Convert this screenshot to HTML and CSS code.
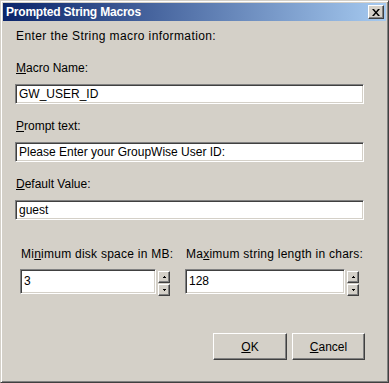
FILE: index.html
```html
<!DOCTYPE html>
<html>
<head>
<meta charset="utf-8">
<link rel="stylesheet" href="styles.css">
</head>
<body>
<div class="window">
  <div class="titlebar">
    <span class="title">Prompted String Macros</span>
    <span class="close"><svg width="8" height="7" viewBox="0 0 8 7"><path d="M0 0h2l2 2.5 2-2.5h2l-3 3.5 3 3.5h-2l-2-2.5-2 2.5h-2l3-3.5z" fill="#000"/></svg></span>
  </div>
  <div class="content">
    <div class="intro">Enter the String macro information:</div>
    <div class="field">
      <div class="label"><u>M</u>acro Name:</div>
      <div class="input">GW_USER_ID</div>
    </div>
    <div class="field">
      <div class="label"><u>P</u>rompt text:</div>
      <div class="input">Please Enter your GroupWise User ID:</div>
    </div>
    <div class="field">
      <div class="label"><u>D</u>efault Value:</div>
      <div class="input">guest</div>
    </div>
    <div class="numrow">
      <div class="numcol first">
        <div class="label wide">Mi<u>n</u>imum disk space in MB:</div>
        <div class="spin">
          <div class="input num">3</div>
          <div class="spinbtns">
            <span class="sbtn"><svg width="3" height="2" viewBox="0 0 3 2"><path d="M1 0h1v1h1v1h-3v-1h1z" fill="#000"/></svg></span>
            <span class="sbtn"><svg width="3" height="2" viewBox="0 0 3 2"><path d="M0 0h3v1h-1v1h-1v-1h-1z" fill="#000"/></svg></span>
          </div>
        </div>
      </div>
      <div class="numcol second">
        <div class="label wide">Ma<u>x</u>imum string length in chars:</div>
        <div class="spin">
          <div class="input num">128</div>
          <div class="spinbtns">
            <span class="sbtn"><svg width="3" height="2" viewBox="0 0 3 2"><path d="M1 0h1v1h1v1h-3v-1h1z" fill="#000"/></svg></span>
            <span class="sbtn"><svg width="3" height="2" viewBox="0 0 3 2"><path d="M0 0h3v1h-1v1h-1v-1h-1z" fill="#000"/></svg></span>
          </div>
        </div>
      </div>
    </div>
    <div class="buttons">
      <span class="btn ok"><u>O</u>K</span>
      <span class="btn cancel"><u>C</u>ancel</span>
    </div>
  </div>
</div>
</body>
</html>
```

FILE: styles.css
```css
html, body {
  margin: 0;
  padding: 0;
  background: #d4d0c8;
}
.window {
  width: 389px;
  height: 383px;
  box-sizing: border-box;
  background: #d4d0c8;
  border-top: 1px solid #d4d0c8;
  border-left: 1px solid #d4d0c8;
  border-right: 1px solid #404040;
  border-bottom: 1px solid #404040;
  box-shadow: inset 1px 1px 0 #ffffff, inset -1px -1px 0 #808080;
  padding: 2px;
  font-family: "Liberation Sans", Arial, sans-serif;
  font-size: 12px;
  color: #000;
  display: flex;
  flex-direction: column;
}
.titlebar {
  height: 18px;
  flex: none;
  background: linear-gradient(to right, #0a246a, #a6caf0);
  display: flex;
  align-items: center;
  justify-content: space-between;
  padding: 0 2px 0 3px;
}
.title {
  color: #fff;
  font-weight: bold;
  font-size: 12px;
  letter-spacing: -0.2px;
}
.close {
  width: 16px;
  height: 14px;
  box-sizing: border-box;
  background: #d4d0c8;
  border-top: 1px solid #fff;
  border-left: 1px solid #fff;
  border-right: 1px solid #404040;
  border-bottom: 1px solid #404040;
  box-shadow: inset -1px -1px 0 #808080;
  display: flex;
  align-items: center;
  justify-content: center;
}
.close svg { display: block; }
.content {
  flex: 1;
  padding: 8px 22px 0 12px;
  display: flex;
  flex-direction: column;
}
.intro, .label {
  line-height: 14px;
  height: 14px;
  padding-left: 1px;
  white-space: nowrap;
}
.intro {
  margin-bottom: 18px;
  letter-spacing: 0.4px;
}
.label.wide {
  letter-spacing: 0.25px;
}
.field {
  display: flex;
  flex-direction: column;
  gap: 9px;
  margin-bottom: 15px;
}
.input {
  height: 20px;
  box-sizing: border-box;
  background: #fff;
  border-top: 1px solid #808080;
  border-left: 1px solid #808080;
  border-right: 1px solid #ffffff;
  border-bottom: 1px solid #ffffff;
  box-shadow: inset 1px 1px 0 #404040, inset -1px -1px 0 #d4d0c8;
  padding: 0 3px;
  line-height: 18px;
  white-space: nowrap;
}
.numrow {
  display: flex;
  gap: 15px;
  margin-top: 12px;
  padding-left: 5px;
}
.numcol {
  display: flex;
  flex-direction: column;
  gap: 8px;
}
.numcol.first { width: 150px; }
.numcol.second { width: 174px; }
.spin {
  display: flex;
  gap: 2px;
  align-items: flex-start;
}
.input.num {
  flex: 1;
  height: 25px;
  line-height: 23px;
}
.spinbtns {
  display: flex;
  flex-direction: column;
  gap: 1px;
  padding-top: 2px;
}
.sbtn {
  width: 12px;
  height: 12px;
  box-sizing: border-box;
  background: #d4d0c8;
  border-top: 1px solid #fff;
  border-left: 1px solid #fff;
  border-right: 1px solid #404040;
  border-bottom: 1px solid #404040;
  box-shadow: inset -1px -1px 0 #808080;
  display: flex;
  align-items: center;
  justify-content: center;
}
.sbtn svg { display: block; }
.buttons {
  display: flex;
  justify-content: flex-end;
  gap: 5px;
  margin-top: 37px;
  margin-right: -1px;
}
.btn {
  height: 27px;
  box-sizing: border-box;
  background: #d4d0c8;
  border-top: 1px solid #fff;
  border-left: 1px solid #fff;
  border-right: 1px solid #404040;
  border-bottom: 1px solid #404040;
  box-shadow: inset -1px -1px 0 #808080;
  display: flex;
  align-items: center;
  justify-content: center;
  font-size: 12px;
}
.btn.ok { width: 74px; }
.btn.cancel { width: 73px; }
```
